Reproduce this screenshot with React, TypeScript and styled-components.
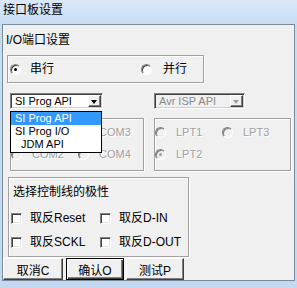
import styled, { createGlobalStyle } from "styled-components";

const GlobalStyle = createGlobalStyle`
  html, body {
    margin: 0;
    padding: 0;
  }
  body {
    background: #c4d9f1;
    font-family: "Liberation Sans", "Noto Sans CJK SC", sans-serif;
    font-size: 12px;
    color: #000;
  }
`;

const Frame = styled.div`
  width: 297px;
  height: 288px;
  display: flex;
  flex-direction: column;
  background: linear-gradient(#dae9f9, #c8dcf3 24px, #c4d9f1);
`;

const TitleBar = styled.div`
  height: 24px;
  padding-left: 3px;
  line-height: 20px;
  box-sizing: border-box;
`;

const Window = styled.div`
  margin: 0 2px;
  height: 257px;
  box-sizing: border-box;
  border: 1px solid #7b8b9b;
  background: #f0f0f0;
  display: flex;
  flex-direction: column;
`;

const Heading = styled.div`
  margin: 8px 0 0 3px;
  line-height: 14px;
`;

const GroupBox = styled.div<{ $w: number; $h: number }>`
  box-sizing: border-box;
  width: ${(p) => p.$w}px;
  height: ${(p) => p.$h}px;
  border: 1px solid #a0a0a0;
  box-shadow: inset 1px 1px 0 #fff, 1px 1px 0 #fff;
  position: relative;
`;

const SerialBox = styled(GroupBox)`
  margin: 8px 0 0 4px;
  display: flex;
  align-items: center;
  padding-left: 2px;
`;

const RadioItem = styled.label<{ $w?: number; $gap?: number }>`
  display: flex;
  align-items: center;
  gap: ${(p) => p.$gap ?? 10}px;
  width: ${(p) => (p.$w ? `${p.$w}px` : "auto")};
  height: 14px;
  line-height: 14px;
`;

const Radio = styled.span<{ $on?: boolean; $off?: boolean }>`
  flex: none;
  box-sizing: border-box;
  width: 11px;
  height: 11px;
  border-radius: 50%;
  border: 1px solid;
  border-color: #808080 #fff #fff #808080;
  background: ${(p) => (p.$off ? "#f0f0f0" : "#fff")};
  box-shadow: inset 1px 1px 0 ${(p) => (p.$off ? "#808080" : "#404040")};
  position: relative;
  &::after {
    content: "";
    display: ${(p) => (p.$on ? "block" : "none")};
    position: absolute;
    left: 3px;
    top: 3px;
    width: 3px;
    height: 3px;
    border-radius: 50%;
    background: ${(p) => (p.$off ? "#a0a0a0" : "#000")};
  }
`;

const BigLabel = styled.span`
  font-size: 12px;
`;

const ComboRow = styled.div`
  margin-top: 10px;
  padding-left: 7px;
  display: flex;
  gap: 51px;
  height: 16px;
  position: relative;
  z-index: 2;
`;

const Combo = styled.div<{ $w: number; $off?: boolean }>`
  position: relative;
  box-sizing: border-box;
  width: ${(p) => p.$w}px;
  height: 16px;
  border: 1px solid;
  border-color: #808080 #fff #fff #808080;
  box-shadow: inset 1px 1px 0 #404040, inset -1px -1px 0 #d4d0c8;
  background: ${(p) => (p.$off ? "#f0f0f0" : "#fff")};
  color: ${(p) => (p.$off ? "#8a8a8a" : "#000")};
  font-size: 11px;
  display: flex;
  align-items: center;
  padding: 1px 1px 1px 4px;
`;

const ComboText = styled.span`
  flex: 1;
  line-height: 12px;
  white-space: nowrap;
`;

const DropButton = styled.span<{ $off?: boolean }>`
  flex: none;
  box-sizing: border-box;
  width: 13px;
  height: 12px;
  background: #f0f0f0;
  border: 1px solid;
  border-color: #fff #404040 #404040 #fff;
  box-shadow: inset -1px -1px 0 #808080;
  display: flex;
  align-items: center;
  justify-content: center;
  &::before {
    content: "";
    width: 0;
    height: 0;
    border-left: 3.5px solid transparent;
    border-right: 3.5px solid transparent;
    border-top: 4px solid ${(p) => (p.$off ? "#a0a0a0" : "#000")};
    margin: 1px 1px 0 0;
  }
`;

const DropList = styled.div`
  position: absolute;
  left: -1px;
  top: 17px;
  width: 92px;
  box-sizing: border-box;
  border: 1px solid #000;
  background: #fff;
  padding-bottom: 1px;
`;

const DropItem = styled.div<{ $sel?: boolean; $indent?: number }>`
  height: 13px;
  line-height: 13px;
  padding-left: ${(p) => 4 + (p.$indent ?? 0)}px;
  font-size: 11px;
  background: ${(p) => (p.$sel ? "#3399ff" : "transparent")};
  color: ${(p) => (p.$sel ? "#fff" : "#000")};
`;

const PortRow = styled.div`
  margin-top: 9px;
  padding-left: 7px;
  display: flex;
  gap: 10px;
`;

const PortBox = styled(GroupBox)`
  display: grid;
  grid-template-columns: 67px auto;
  grid-auto-rows: 14px;
  row-gap: 8px;
  padding-top: 6px;
  align-content: start;
`;

const DimLabel = styled.span`
  font-size: 11px;
  color: #a0a0a0;
  text-shadow: 1px 1px 0 #fff;
`;

const PolarityBox = styled(GroupBox)`
  margin: 6px 0 0 5px;
  padding: 7px 0 0 4px;
`;

const Caption = styled.div`
  line-height: 14px;
`;

const CheckGrid = styled.div`
  margin: 12px 0 0 -2px;
  display: grid;
  grid-template-columns: 89px auto;
  grid-auto-rows: 14px;
  row-gap: 10px;
`;

const CheckItem = styled.label`
  display: flex;
  align-items: center;
  gap: 8px;
  line-height: 14px;
  white-space: nowrap;
`;

const CheckBox = styled.span`
  flex: none;
  box-sizing: border-box;
  width: 11px;
  height: 11px;
  border: 1px solid;
  border-color: #808080 #fff #fff #808080;
  box-shadow: inset 1px 1px 0 #404040, inset -1px -1px 0 #e3e3e3;
  background: #fff;
`;

const ButtonRow = styled.div`
  margin-top: 1px;
  display: flex;
  gap: 2px;
`;

const Button = styled.button<{ $w: number; $focus?: boolean }>`
  box-sizing: border-box;
  width: ${(p) => p.$w}px;
  height: 22px;
  padding: 0;
  font: inherit;
  font-size: 12px;
  color: #000;
  background: #f0f0f0;
  border: 1px solid;
  border-color: ${(p) =>
    p.$focus ? "#000" : "#fff #404040 #404040 #fff"};
  box-shadow: ${(p) =>
    p.$focus
      ? "inset 1px 1px 0 #fff, inset -1px -1px 0 #404040, inset -2px -2px 0 #808080"
      : "inset -1px -1px 0 #808080"};
  &:first-child {
    margin-right: 1px;
  }
`;

const comPorts = ["", "COM3", "COM2", "COM4"];

export default function App() {
  return (
    <>
      <GlobalStyle />
      <Frame>
        <TitleBar>接口板设置</TitleBar>
        <Window>
          <Heading>I/O端口设置</Heading>
          <SerialBox $w={197} $h={28}>
            <RadioItem $w={131} $gap={9}>
              <Radio $on />
              <BigLabel>串行</BigLabel>
            </RadioItem>
            <RadioItem $gap={11}>
              <Radio />
              <BigLabel>并行</BigLabel>
            </RadioItem>
          </SerialBox>

          <ComboRow>
            <Combo $w={93}>
              <ComboText>SI Prog API</ComboText>
              <DropButton />
              <DropList>
                <DropItem $sel>SI Prog API</DropItem>
                <DropItem>SI Prog I/O</DropItem>
                <DropItem $indent={6}>JDM API</DropItem>
              </DropList>
            </Combo>
            <Combo $w={91} $off>
              <ComboText>Avr ISP API</ComboText>
              <DropButton $off />
            </Combo>
          </ComboRow>

          <PortRow>
            <PortBox $w={134} $h={53}>
              {comPorts.map((c, i) =>
                c ? (
                  <RadioItem key={c}>
                    <Radio $off />
                    <DimLabel>{c}</DimLabel>
                  </RadioItem>
                ) : (
                  <span key={i} />
                )
              )}
            </PortBox>
            <PortBox $w={137} $h={53}>
              {["LPT1", "LPT3", "LPT2"].map((c) => (
                <RadioItem key={c}>
                  <Radio $off $on={c === "LPT2"} />
                  <DimLabel>{c}</DimLabel>
                </RadioItem>
              ))}
            </PortBox>
          </PortRow>

          <PolarityBox $w={181} $h={80}>
            <Caption>选择控制线的极性</Caption>
            <CheckGrid>
              <CheckItem>
                <CheckBox />
                取反Reset
              </CheckItem>
              <CheckItem>
                <CheckBox />
                取反D-IN
              </CheckItem>
              <CheckItem>
                <CheckBox />
                取反SCKL
              </CheckItem>
              <CheckItem>
                <CheckBox />
                取反D-OUT
              </CheckItem>
            </CheckGrid>
          </PolarityBox>

          <ButtonRow>
            <Button $w={60}>取消C</Button>
            <Button $w={58} $focus>
              确认O
            </Button>
            <Button $w={58}>测试P</Button>
          </ButtonRow>
        </Window>
      </Frame>
    </>
  );
}
